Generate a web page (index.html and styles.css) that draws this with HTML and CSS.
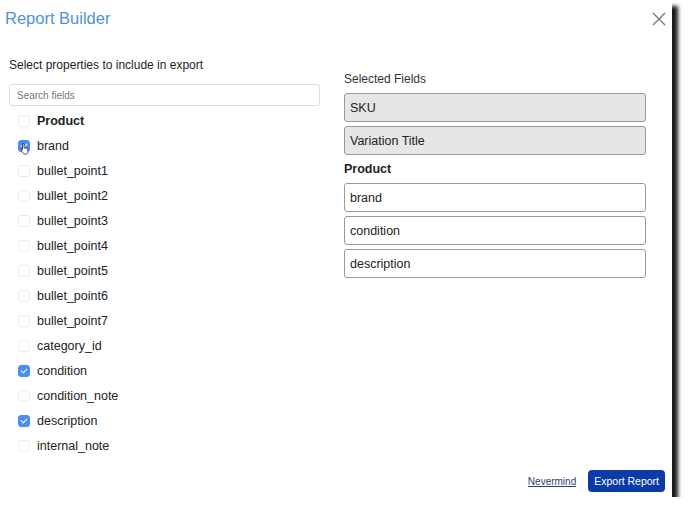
FILE: index.html
```html
<!DOCTYPE html>
<html lang="en">
<head>
    <meta charset="UTF-8">
    <meta name="viewport" content="width=device-width, initial-scale=1.0">
    <title>Report Builder</title>
    <link rel="stylesheet" href="styles.css">
</head>
<body>
    <div class="modal">
        <div class="modal-header">
            <h1>Report Builder</h1>
            <button class="close" aria-label="Close">
                <svg width="14" height="14" viewBox="0 0 14 14"><path d="M1 1L13 13M13 1L1 13" stroke="#777" stroke-width="1.4" fill="none"/></svg>
            </button>
        </div>

        <div class="modal-body">
            <div class="left-col">
                <p class="intro">Select properties to include in export</p>
                <input type="text" class="search" placeholder="Search fields">
                <div class="field-list">
                    <label class="row group"><span class="box"></span>Product</label>
                    <label class="row"><span class="box checked"></span>brand
                        <svg class="cursor" width="11" height="13" viewBox="0 0 11 13"><path d="M3 1.2c.6 0 1 .4 1 1V6l.4-.2c.5-.1 1 .2 1 .6.3-.4 1-.4 1.3 0 .3-.3 1-.3 1.2.2v3c0 1.4-1 2.6-2.4 2.6H5c-1 0-1.6-.5-2.1-1.2L1 8.2c-.3-.5 0-1 .5-1 .4 0 .7.2 1 .6V2.2c0-.6.1-1 .5-1z" fill="#fff" stroke="#222" stroke-width=".8"/></svg>
                    </label>
                    <label class="row"><span class="box"></span>bullet_point1</label>
                    <label class="row"><span class="box"></span>bullet_point2</label>
                    <label class="row"><span class="box"></span>bullet_point3</label>
                    <label class="row"><span class="box"></span>bullet_point4</label>
                    <label class="row"><span class="box"></span>bullet_point5</label>
                    <label class="row"><span class="box"></span>bullet_point6</label>
                    <label class="row"><span class="box"></span>bullet_point7</label>
                    <label class="row"><span class="box"></span>category_id</label>
                    <label class="row"><span class="box checked"></span>condition</label>
                    <label class="row"><span class="box"></span>condition_note</label>
                    <label class="row"><span class="box checked"></span>description</label>
                    <label class="row"><span class="box"></span>internal_note</label>
                </div>
            </div>

            <div class="right-col">
                <p class="selected-title">Selected Fields</p>
                <div class="field fixed">SKU</div>
                <div class="field fixed">Variation Title</div>
                <p class="group-title">Product</p>
                <div class="field">brand</div>
                <div class="field">condition</div>
                <div class="field">description</div>
            </div>
        </div>

        <div class="modal-footer">
            <a href="#" class="link">Nevermind</a>
            <button class="export">Export Report</button>
        </div>
    </div>
</body>
</html>
```

FILE: styles.css
```css
body {
    margin: 0;
    background: #fff;
    font-family: "Liberation Sans", Arial, sans-serif;
    color: #222;
}
.modal {
    width: 672px;
    height: 497px;
    background: #fff;
    box-shadow: 6px 6px 4px rgba(0, 0, 0, 0.9);
    display: flex;
    flex-direction: column;
}
.modal-header {
    height: 40px;
    padding: 0 6px 0 5px;
    display: flex;
    justify-content: space-between;
    align-items: flex-start;
    box-sizing: border-box;
}
.modal-header h1 {
    margin: 8px 0 0;
    font-size: 16.5px;
    line-height: 20px;
    font-weight: normal;
    color: #4f93d5;
}
.close {
    margin-top: 12px;
    padding: 0;
    border: none;
    background: none;
    width: 14px;
    height: 14px;
}
.close svg {
    display: block;
}
.modal-body {
    flex: 1;
    display: flex;
    gap: 24px;
    padding-left: 9px;
    min-height: 0;
}
.left-col {
    width: 311px;
    padding-top: 17px;
}
.intro {
    margin: 0 0 11px;
    font-size: 12px;
    line-height: 16px;
}
.search {
    display: block;
    width: 100%;
    height: 22px;
    box-sizing: border-box;
    border: 1px solid #ddd;
    border-radius: 3px;
    padding: 0 7px;
    font-family: inherit;
    font-size: 10px;
    color: #333;
    outline: none;
}
.search::placeholder {
    color: #777;
}
.field-list {
    margin-top: 2px;
    height: 345px;
    overflow: hidden;
    padding-left: 9px;
}
.row {
    position: relative;
    height: 25px;
    display: flex;
    align-items: center;
    gap: 7px;
    font-size: 12.5px;
}
.row.group {
    font-weight: bold;
}
.box {
    width: 10px;
    height: 10px;
    border: 1px solid #ececec;
    border-radius: 3px;
    background: #fff;
    position: relative;
}
.box.checked {
    background: #4a8ff0;
    border-color: #4a8ff0;
}
.box.checked::after {
    content: "";
    position: absolute;
    left: 3px;
    top: 1px;
    width: 3px;
    height: 5px;
    border: solid #fff;
    border-width: 0 1.5px 1.5px 0;
    transform: rotate(45deg);
}
.cursor {
    position: absolute;
    left: 2px;
    top: 9px;
}
.right-col {
    width: 302px;
    padding-top: 31px;
}
.selected-title {
    margin: 0 0 6px;
    font-size: 12px;
    line-height: 16px;
    color: #333;
}
.group-title {
    margin: 6px 0 6px;
    font-size: 12.5px;
    line-height: 16px;
    font-weight: bold;
}
.field {
    height: 29px;
    box-sizing: border-box;
    border: 1px solid #999;
    border-radius: 3px;
    padding-left: 5px;
    display: flex;
    align-items: center;
    font-size: 12.5px;
    margin-bottom: 4px;
    background: #fff;
}
.field.fixed {
    background: #e6e6e6;
}
.modal-footer {
    display: flex;
    justify-content: flex-end;
    align-items: center;
    gap: 12px;
    padding: 0 7px 5px 0;
}
.link {
    font-size: 10px;
    color: #2d3f6e;
}
.export {
    height: 22px;
    padding: 0 6px;
    border: none;
    border-radius: 4px;
    background: #0c3aa8;
    color: #fff;
    font-family: inherit;
    font-size: 10.5px;
}
```
